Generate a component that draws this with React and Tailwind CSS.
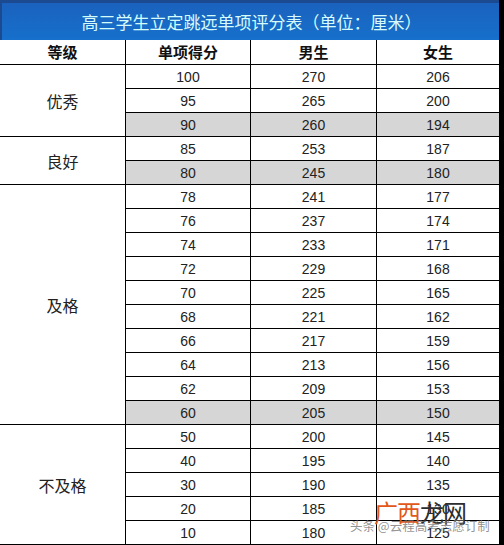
import React from "react";

const rows = [
  ["100", "270", "206", false],
  ["95", "265", "200", false],
  ["90", "260", "194", true],
  ["85", "253", "187", false],
  ["80", "245", "180", true],
  ["78", "241", "177", false],
  ["76", "237", "174", false],
  ["74", "233", "171", false],
  ["72", "229", "168", false],
  ["70", "225", "165", false],
  ["68", "221", "162", false],
  ["66", "217", "159", false],
  ["64", "213", "156", false],
  ["62", "209", "153", false],
  ["60", "205", "150", true],
  ["50", "200", "145", false],
  ["40", "195", "140", false],
  ["30", "190", "135", false],
  ["20", "185", "130", false],
  ["10", "180", "125", false],
];

const groups = [
  { label: "优秀", cls: "row-start-2 row-span-3" },
  { label: "良好", cls: "row-start-5 row-span-2" },
  { label: "及格", cls: "row-start-7 row-span-10" },
  { label: "不及格", cls: "row-start-17 row-span-5" },
];

const headers = [
  ["等级", "col-start-1"],
  ["单项得分", "col-start-2"],
  ["男生", "col-start-3"],
  ["女生", "col-start-4"],
];

export default function App() {
  return (
    <div className="relative w-[504px] h-[545px] bg-black overflow-hidden font-['Noto_Sans_CJK_SC','Noto_Sans',sans-serif]">
      <div className="h-[40px] w-[499px] flex items-center justify-center border-t-[3px] border-l-2 border-[#1b4a90] bg-gradient-to-b from-[#1a62bd] to-[#1670cc]">
        <span className="text-[17px] text-[#d6fbfb] pl-[2px]">
          高三学生立定跳远单项评分表（单位：厘米）
        </span>
      </div>
      <div className="grid grid-cols-[125px_124px_125px_122px] grid-rows-[24px_repeat(20,23px)] gap-px w-[499px]">
        {headers.map(([t, c]) => (
          <div
            key={t}
            className={`bg-white row-start-1 ${c} flex items-center justify-center text-[15px] font-bold text-[#111]`}
          >
            {t}
          </div>
        ))}
        {groups.map((g) => (
          <div
            key={g.label}
            className={`bg-white col-start-1 ${g.cls} flex items-center justify-center text-[16px] text-[#222]`}
          >
            {g.label}
          </div>
        ))}
        {rows.map((r, i) =>
          [r[0], r[1], r[2]].map((v, j) => (
            <div
              key={i + "-" + j}
              className={`${r[3] ? "bg-[#d6d6d6]" : "bg-white"} flex items-center justify-center pt-px text-[14px] text-[#222] font-['Liberation_Sans',Arial,sans-serif]`}
              style={{ gridRowStart: i + 2, gridColumnStart: j + 2 }}
            >
              {v}
            </div>
          ))
        )}
      </div>
      <div className="absolute left-[374px] top-[500px] flex text-[24px] leading-none tracking-[-1px]">
        <span className="text-[#e2571a]">广西</span>
        <span className="text-[#2d2d2d]">龙网</span>
      </div>
      <div className="absolute left-[350px] top-[520px] text-[12.5px] text-[#777]/80 leading-none whitespace-nowrap">
        头条 @云程高考志愿订制
      </div>
    </div>
  );
}
